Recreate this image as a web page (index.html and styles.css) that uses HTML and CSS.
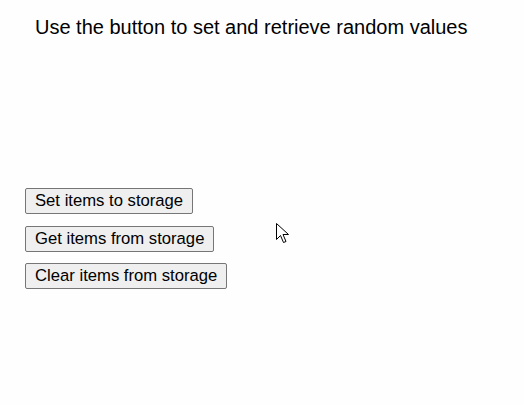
FILE: index.html
```html
<!DOCTYPE html>
<html>
<head>
<meta charset="utf-8">
<link rel="stylesheet" href="styles.css">
</head>
<body>
<div class="page">
  <h1 class="title">Use the button to set and retrieve random values</h1>
  <div class="actions">
    <button class="btn">Set items to storage</button>
    <button class="btn">Get items from storage</button>
    <button class="btn">Clear items from storage</button>
  </div>
</div>
<svg class="cursor" width="13" height="21" viewBox="0 0 13 21">
  <path d="M0.5 0.5 L0.5 16.5 L4.5 12.5 L7.5 19.5 L10 18.5 L7 11.5 L12.5 11.5 Z" fill="#fff" stroke="#000" stroke-width="1" stroke-linejoin="miter"/>
</svg>
</body>
</html>
```
FILE: styles.css
```css
html, body {
  margin: 0;
  padding: 0;
  background: #fefefe;
}
.page {
  font-family: "Liberation Sans", Arial, sans-serif;
  color: #000;
  padding: 0 0 0 25px;
}
.title {
  margin: 0;
  padding: 16px 0 0 10px;
  font-size: 20px;
  font-weight: normal;
  line-height: 23px;
}
.actions {
  display: flex;
  flex-direction: column;
  align-items: flex-start;
  gap: 11.5px;
  margin-top: 149px;
}
.btn {
  font-family: "Liberation Sans", Arial, sans-serif;
  font-size: 16.67px;
  color: #000;
  background: #efefef;
  border: 1px solid #767676;
  border-radius: 2px;
  padding: 3px 9px;
  line-height: 18px;
}
.cursor {
  position: absolute;
  left: 276px;
  top: 223px;
}
```
